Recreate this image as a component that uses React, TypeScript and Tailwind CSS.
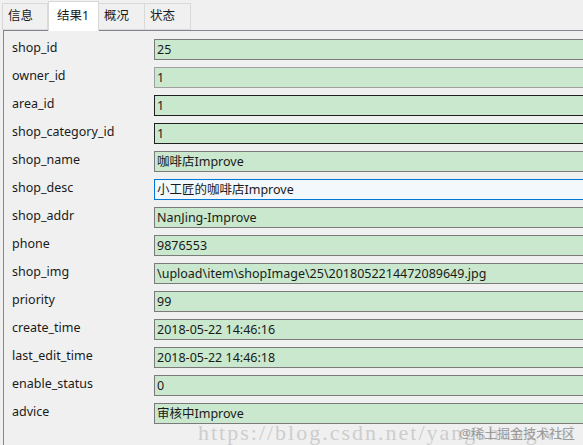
import React from "react";

type Row = { label: string; value: string; border: string; bg?: string };

const rows: Row[] = [
  { label: "shop_id", value: "25", border: "border-[#7a7a7a]" },
  { label: "owner_id", value: "1", border: "border-[#a0a0a0]" },
  { label: "area_id", value: "1", border: "border-[#202020]" },
  { label: "shop_category_id", value: "1", border: "border-[#202020]" },
  { label: "shop_name", value: "咖啡店Improve", border: "border-[#7a7a7a]" },
  { label: "shop_desc", value: "小工匠的咖啡店Improve", border: "border-[#0078d7]", bg: "bg-[#f3f8fd]" },
  { label: "shop_addr", value: "NanJing-Improve", border: "border-[#7a7a7a]" },
  { label: "phone", value: "9876553", border: "border-[#7a7a7a]" },
  { label: "shop_img", value: "\\upload\\item\\shopImage\\25\\2018052214472089649.jpg", border: "border-[#7a7a7a]" },
  { label: "priority", value: "99", border: "border-[#7a7a7a]" },
  { label: "create_time", value: "2018-05-22 14:46:16", border: "border-[#7a7a7a]" },
  { label: "last_edit_time", value: "2018-05-22 14:46:18", border: "border-[#7a7a7a]" },
  { label: "enable_status", value: "0", border: "border-[#7a7a7a]" },
  { label: "advice", value: "审核中Improve", border: "border-[#7a7a7a]" },
];

const tabs = ["信息", "结果1", "概况", "状态"];

export default function App() {
  return (
    <div
      className="relative w-[583px] h-[445px] overflow-hidden bg-[#f0f0f0] text-[12.5px] text-[#1a1a1a]"
      style={{ fontFamily: '"Noto Sans", "Noto Sans CJK SC", sans-serif' }}
    >
      {/* Tabs */}
      <div className="flex items-end h-[30px] pl-[2px]">
        {tabs.map((t, i) =>
          i === 1 ? (
            <div
              key={t}
              className="h-[30px] w-[51px] -mb-px z-10 bg-white border border-b-0 border-[#d9d9d9] flex items-center pl-[8px] leading-none"
            >
              {t}
            </div>
          ) : (
            <div
              key={t}
              className="h-[27px] w-[46px] bg-[#f0f0f0] border border-[#d9d9d9] border-l-0 first:border-l flex items-center pl-[5px] leading-none"
            >
              {t}
            </div>
          )
        )}
      </div>

      {/* Panel */}
      <div className="ml-[3px] w-[620px] border-t border-l border-[#828790] bg-[#f0f0f0] pt-[8px] pl-[8px] h-[420px]">
        {rows.map((r) => (
          <div key={r.label} className="flex items-start h-[28px]">
            <div className="w-[142px] shrink-0 leading-[18px]">{r.label}</div>
            <div
              className={`flex-1 h-[21px] border ${r.border} ${r.bg ?? "bg-[#c9e8cd]"} pl-[2px] leading-[19px] whitespace-nowrap`}
            >
              {r.value}
            </div>
          </div>
        ))}
      </div>

      {/* Watermark */}
      <div
        className="absolute left-[198px] top-[422px] text-[22px] leading-[22px] text-[#9a9a9a] opacity-40 whitespace-nowrap tracking-[2px]"
        style={{ fontFamily: '"Liberation Serif", serif' }}
      >
        https://blog.csdn.net/yangshangwei
      </div>
      <div className="absolute right-[8px] top-[425px] text-[13px] leading-[16px] text-[#8a8a8a] opacity-80 whitespace-nowrap">
        @稀土掘金技术社区
      </div>
    </div>
  );
}
